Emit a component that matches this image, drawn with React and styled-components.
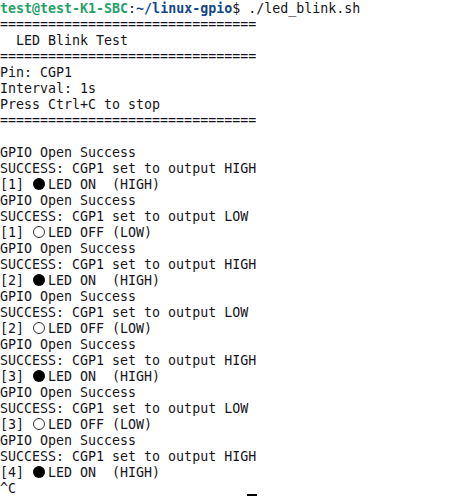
import React from "react";
import styled, { createGlobalStyle } from "styled-components";

const GlobalStyle = createGlobalStyle`
  html, body {
    margin: 0;
    padding: 0;
    background: #ffffff;
  }
`;

const Terminal = styled.div`
  position: relative;
  width: 472px;
  height: 497px;
  overflow: hidden;
  background: #ffffff;
  color: #171421;
  font-family: "DejaVu Sans Mono", "Liberation Mono", monospace;
  font-size: 13.3px;
  line-height: 16px;
  padding-top: 1px;
  box-sizing: border-box;
`;

const Line = styled.div`
  white-space: pre;
  height: 16px;
`;

const Host = styled.span`
  color: #26a269;
  font-weight: bold;
`;

const Path = styled.span`
  color: #12488b;
  font-weight: bold;
`;

const Dot = styled.span`
  display: inline-block;
  vertical-align: top;
  box-sizing: border-box;
  width: 12px;
  height: 12px;
  margin: 1px 3px 0 1px;
  border-radius: 50%;
  background: ${(p) => (p.$on ? "#000000" : "transparent")};
  border: ${(p) => (p.$on ? "none" : "1px solid #333333")};
`;

const Pointer = styled.div`
  position: absolute;
  left: 247px;
  top: 494px;
  width: 10px;
  height: 2px;
  background: #000000;
`;

const header = [
  "================================",
  "  LED Blink Test",
  "================================",
  "Pin: CGP1",
  "Interval: 1s",
  "Press Ctrl+C to stop",
  "================================",
  "",
];

const cycles = [
  { n: 1, on: true },
  { n: 1, on: false },
  { n: 2, on: true },
  { n: 2, on: false },
  { n: 3, on: true },
  { n: 3, on: false },
  { n: 4, on: true },
];

function App() {
  return (
    <>
      <GlobalStyle />
      <Terminal>
        <Line>
          <Host>test@test-K1-SBC</Host>:<Path>~/linux-gpio</Path>$ ./led_blink.sh
        </Line>
        {header.map((t, i) => (
          <Line key={"h" + i}>{t}</Line>
        ))}
        {cycles.map((c, i) => (
          <React.Fragment key={"c" + i}>
            <Line>GPIO Open Success</Line>
            <Line>SUCCESS: CGP1 set to output {c.on ? "HIGH" : "LOW"}</Line>
            <Line>
              [{c.n}] <Dot $on={c.on} />
              {c.on ? "LED ON  (HIGH)" : "LED OFF (LOW)"}
            </Line>
          </React.Fragment>
        ))}
        <Line>^C</Line>
        <Pointer />
      </Terminal>
    </>
  );
}

export default App;
